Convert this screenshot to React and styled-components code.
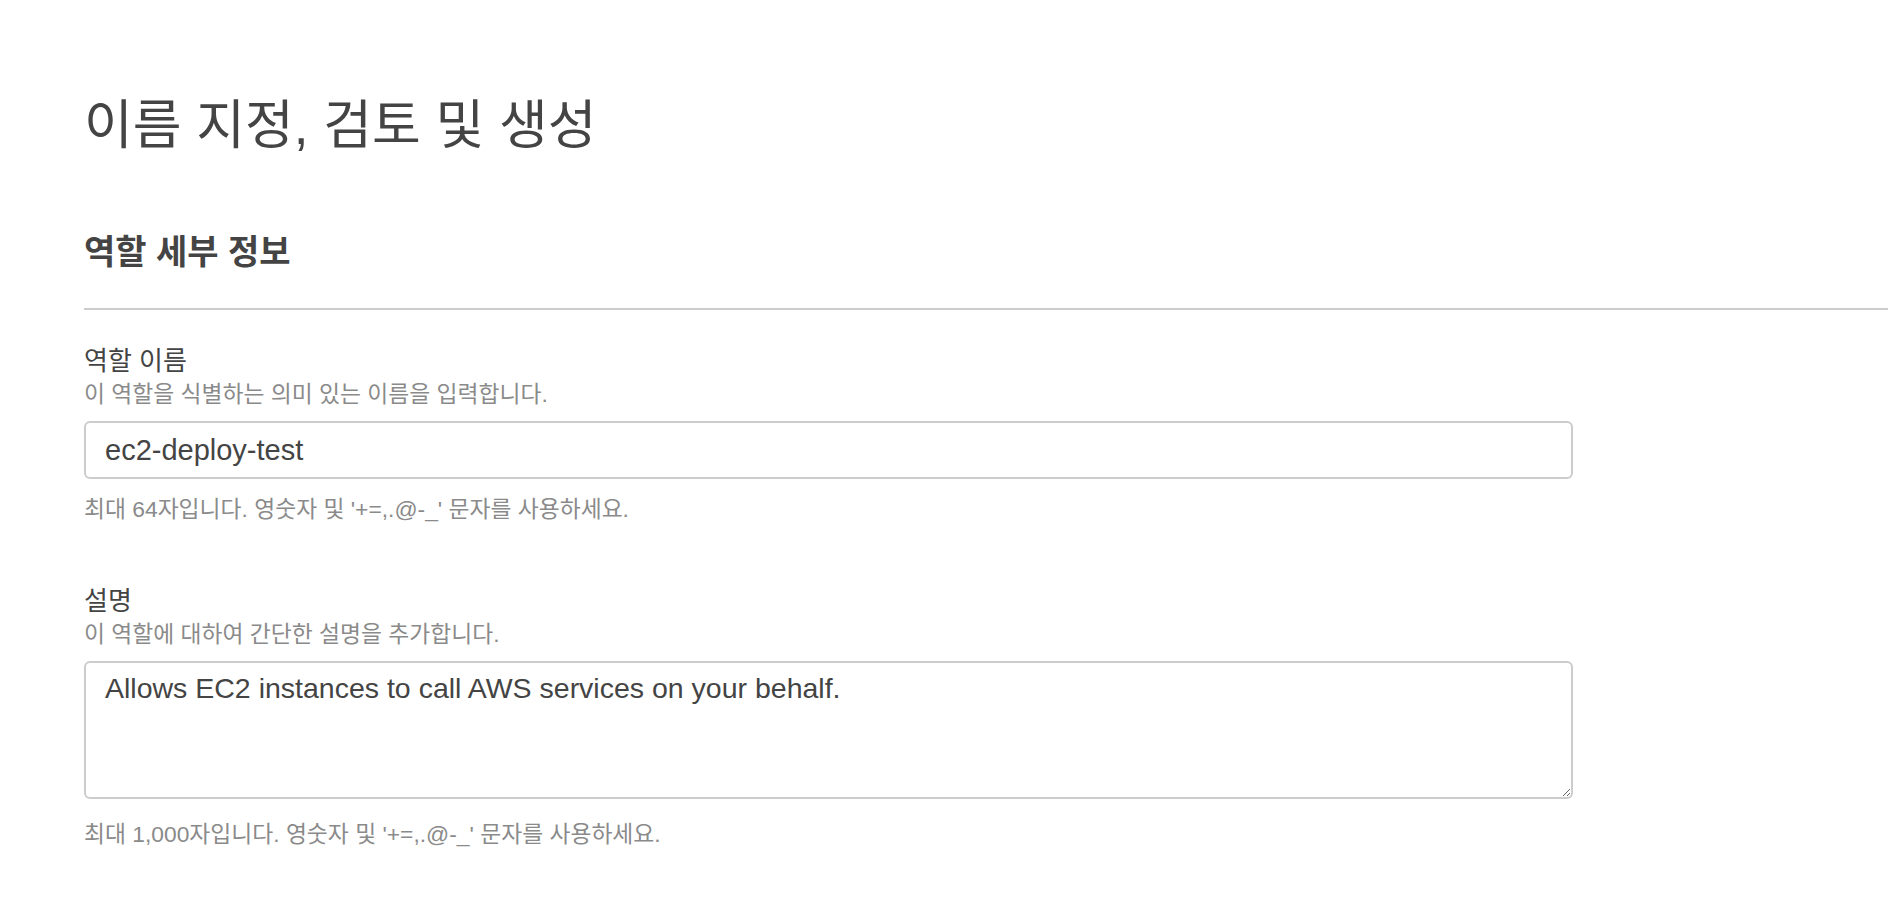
import React from "react";
import styled, { createGlobalStyle } from "styled-components";

const GlobalStyle = createGlobalStyle`
  html, body {
    margin: 0;
    padding: 0;
    background: #ffffff;
  }
  body {
    font-family: "Liberation Sans", Arial, "Noto Sans CJK KR", sans-serif;
    color: #444444;
  }
`;

const Page = styled.main`
  padding: 94px 0 40px 84px;
  box-sizing: border-box;
  width: 1888px;
`;

const Title = styled.h1`
  margin: 0;
  font-size: 53px;
  line-height: 64px;
  font-weight: 400;
  color: #444444;
`;

const Section = styled.section`
  margin-top: 74px;
`;

const SectionHeader = styled.h2`
  margin: 0;
  font-size: 34px;
  line-height: 40px;
  font-weight: 700;
  color: #444444;
  padding-bottom: 36px;
  border-bottom: 2px solid #cccccc;
`;

const Form = styled.div`
  display: flex;
  flex-direction: column;
  gap: 60px;
  padding-top: 34px;
  width: 1489px;
`;

const Field = styled.div`
  display: flex;
  flex-direction: column;
`;

const Label = styled.label`
  font-size: 26px;
  line-height: 35px;
  color: #444444;
`;

const Hint = styled.div`
  font-size: 22.8px;
  line-height: 30px;
  color: #8a8a8a;
`;

const Constraint = styled(Hint)`
  margin-top: ${(p) => p.$gap}px;
`;

const controlBase = `
  box-sizing: border-box;
  display: block;
  width: 100%;
  border: 2px solid #cccccc;
  border-radius: 6px;
  background: #ffffff;
  color: #444444;
  font-family: "Liberation Sans", Arial, "Noto Sans CJK KR", sans-serif;
  font-size: 28.5px;
  padding: 0 19px;
  margin: 12px 0 0;
  outline: none;
`;

const TextInput = styled.input`
  ${controlBase}
  height: 58px;
  font-size: 29px;
`;

const TextArea = styled.textarea`
  ${controlBase}
  height: 138px;
  padding-top: 8px;
  line-height: 34px;
  resize: vertical;
`;

export default function App() {
  return (
    <>
      <GlobalStyle />
      <Page>
        <Title>이름 지정, 검토 및 생성</Title>
        <Section>
          <SectionHeader>역할 세부 정보</SectionHeader>
          <Form>
            <Field>
              <Label htmlFor="role-name">역할 이름</Label>
              <Hint>이 역할을 식별하는 의미 있는 이름을 입력합니다.</Hint>
              <TextInput id="role-name" defaultValue="ec2-deploy-test" />
              <Constraint $gap={15}>
                최대 64자입니다. 영숫자 및 '+=,.@-_' 문자를 사용하세요.
              </Constraint>
            </Field>
            <Field>
              <Label htmlFor="role-desc">설명</Label>
              <Hint>이 역할에 대하여 간단한 설명을 추가합니다.</Hint>
              <TextArea
                id="role-desc"
                defaultValue="Allows EC2 instances to call AWS services on your behalf."
              />
              <Constraint $gap={20}>
                최대 1,000자입니다. 영숫자 및 '+=,.@-_' 문자를 사용하세요.
              </Constraint>
            </Field>
          </Form>
        </Section>
      </Page>
    </>
  );
}
